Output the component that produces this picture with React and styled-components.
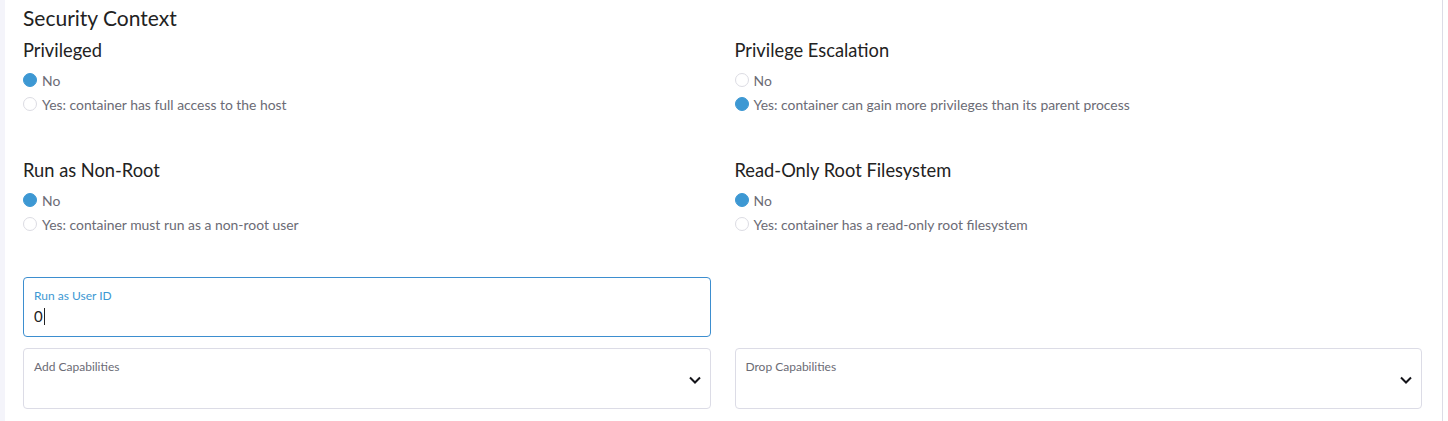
import React from "react";
import styled, { createGlobalStyle } from "styled-components";

const Global = createGlobalStyle`
  html, body { margin: 0; padding: 0; background: #fff; }
  body { font-family: Lato, "Open Sans", "Liberation Sans", sans-serif; color: #222; }
`;

const Page = styled.div`
  display: flex;
  min-height: 421px;
`;

const Stripe = styled.div`
  width: 5px;
  flex: none;
  background: #f4f4fa;
`;

const Main = styled.main`
  width: 1438px;
  flex: none;
  box-sizing: border-box;
  padding: 6px 20px 0 18px;
  border-right: 1px solid #dcdce6;
`;

const Title = styled.h2`
  margin: 0;
  font-size: 21px;
  font-weight: 400;
  line-height: 24px;
  color: #222;
`;

const Grid = styled.div`
  display: grid;
  grid-template-columns: 1fr 1fr;
  column-gap: 24px;
  row-gap: ${(p) => p.$rowGap || 0}px;
  margin-top: ${(p) => p.$mt || 0}px;
`;

const Group = styled.div`
  display: flex;
  flex-direction: column;
`;

const Heading = styled.h3`
  margin: 0 0 6px;
  font-size: 18.3px;
  font-weight: 400;
  line-height: 24px;
  color: #222;
`;

const RadioRow = styled.label`
  display: flex;
  align-items: center;
  gap: 5px;
  height: 24px;
  font-size: 13.9px;
  color: #6b6b75;
`;

const Dot = styled.span`
  width: 14px;
  height: 14px;
  box-sizing: border-box;
  border-radius: 50%;
  flex: none;
  background: ${(p) => (p.$on ? "#3d98d3" : "#fff")};
  border: 1px solid ${(p) => (p.$on ? "#3d98d3" : "#dcdce3")};
`;

const Field = styled.div`
  position: relative;
  box-sizing: border-box;
  height: ${(p) => p.$h}px;
  border: 1px solid ${(p) => (p.$focus ? "#3d8ecf" : "#dcdce6")};
  border-radius: 4px;
  padding: 10px 10px 0;
  display: flex;
  flex-direction: column;
`;

const FieldLabel = styled.span`
  font-size: 12px;
  line-height: 15px;
  color: ${(p) => (p.$focus ? "#3d98d3" : "#6b6b75")};
`;

const Value = styled.span`
  display: flex;
  align-items: center;
  font-size: 15px;
  line-height: 20px;
  margin-top: 3px;
  color: #222;
`;

const Caret = styled.span`
  display: inline-block;
  width: 1px;
  height: 17px;
  background: #222;
  margin-left: 1px;
`;

const Chevron = styled.svg`
  position: absolute;
  right: 8px;
  top: 26px;
`;

const Spacer = styled.div``;

function Radio({ on, children }) {
  return (
    <RadioRow>
      <Dot $on={on} />
      {children}
    </RadioRow>
  );
}

function RadioGroup({ title, value, yes }) {
  return (
    <Group>
      <Heading>{title}</Heading>
      <Radio on={!value}>No</Radio>
      <Radio on={value}>{yes}</Radio>
    </Group>
  );
}

function Select({ label }) {
  return (
    <Field $h={61}>
      <FieldLabel>{label}</FieldLabel>
      <Chevron width="14" height="10" viewBox="0 0 14 10">
        <path d="M2 2.5 L7 7.5 L12 2.5" fill="none" stroke="#141419" strokeWidth="2" />
      </Chevron>
    </Field>
  );
}

export default function App() {
  return (
    <Page>
      <Global />
      <Stripe />
      <Main>
        <Title>Security Context</Title>
        <Grid $mt={8} $rowGap={42}>
          <RadioGroup title="Privileged" value={false} yes="Yes: container has full access to the host" />
          <RadioGroup title="Privilege Escalation" value={true} yes="Yes: container can gain more privileges than its parent process" />
          <RadioGroup title="Run as Non-Root" value={false} yes="Yes: container must run as a non-root user" />
          <RadioGroup title="Read-Only Root Filesystem" value={false} yes="Yes: container has a read-only root filesystem" />
        </Grid>
        <Grid $mt={41} $rowGap={11}>
          <Field $h={60} $focus>
            <FieldLabel $focus>Run as User ID</FieldLabel>
            <Value>0<Caret /></Value>
          </Field>
          <Spacer />
          <Select label="Add Capabilities" />
          <Select label="Drop Capabilities" />
        </Grid>
      </Main>
    </Page>
  );
}
